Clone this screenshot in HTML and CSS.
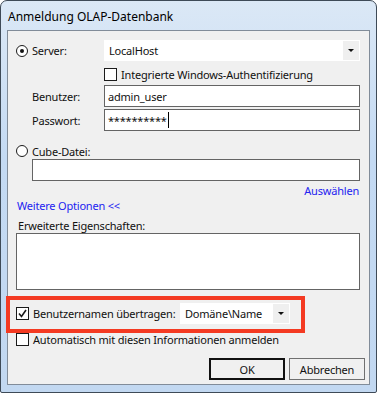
FILE: index.html
```html
<!DOCTYPE html>
<html lang="de">
<head>
  <meta charset="UTF-8" />
  <title>Anmeldung OLAP-Datenbank</title>
  <link rel="stylesheet" href="styles.css">
</head>
<body>
  <div class="window">
    <div class="titlebar">Anmeldung OLAP-Datenbank</div>
    <div class="client">

      <div class="row r-server">
        <span class="radio checked"></span>
        <span class="label">Server:</span>
        <div class="combo wide">
          <span class="value">LocalHost</span>
          <span class="drop"><span class="arrow"></span></span>
        </div>
      </div>

      <div class="row r-wauth">
        <span class="check"></span>
        <span>Integrierte Windows-Authentifizierung</span>
      </div>

      <div class="row r-user">
        <span class="label">Benutzer:</span>
        <div class="input wide">admin_user</div>
      </div>

      <div class="row r-pass">
        <span class="label">Passwort:</span>
        <div class="input wide">**********<span class="caret"></span></div>
      </div>

      <div class="row r-cube">
        <span class="radio"></span>
        <span>Cube-Datei:</span>
      </div>

      <div class="row r-cubefile">
        <div class="input full"></div>
      </div>

      <div class="row r-select">
        <a class="link">Auswählen</a>
      </div>

      <div class="row r-more">
        <a class="link">Weitere Optionen &lt;&lt;</a>
      </div>

      <div class="row r-props">Erweiterte Eigenschaften:</div>
      <div class="textarea"></div>

      <div class="row r-pass-user">
        <span class="check checked">
          <svg width="9" height="9" viewBox="0 0 9 9"><path d="M1 4.5 L3.5 7.5 L8 1" fill="none" stroke="#1b1b1b" stroke-width="1.6"/></svg>
        </span>
        <span class="label2">Benutzernamen übertragen:</span>
        <div class="combo small">
          <span class="value">Domäne\Name</span>
          <span class="drop"><span class="arrow"></span></span>
        </div>
        <div class="highlight"></div>
      </div>

      <div class="row r-auto">
        <span class="check"></span>
        <span>Automatisch mit diesen Informationen anmelden</span>
      </div>

      <div class="buttons">
        <button class="btn default">OK</button>
        <button class="btn">Abbrechen</button>
      </div>
    </div>
  </div>
</body>
</html>
```

FILE: styles.css
```css
html, body {
  margin: 0;
  padding: 0;
  background: #fff;
}
body {
  font-family: "Noto Sans", "Open Sans", sans-serif;
  font-size: 11px;
  letter-spacing: -0.2px;
  color: #111;
}
.window {
  width: 377px;
  height: 393px;
  box-sizing: border-box;
  border: 1px solid #3e4a57;
  border-radius: 7px 7px 2px 2px;
  background: linear-gradient(#dbe8f6, #c4daf3 40%, #c2d8f1);
  display: flex;
  flex-direction: column;
}
.titlebar {
  height: 29px;
  padding-left: 7px;
  line-height: 31px;
  font-size: 12px;
  letter-spacing: 0;
  color: #000;
}
.client {
  width: 363px;
  height: 355px;
  margin-left: 6px;
  box-sizing: border-box;
  border: 1px solid #818c99;
  background: #f0f0f0;
  padding: 9px 8px 0 8px;
  position: relative;
}
.row {
  display: flex;
  align-items: center;
}
.radio {
  width: 10px;
  height: 10px;
  border: 1px solid #1b1b1b;
  border-radius: 50%;
  background: #fff;
  margin-right: 4px;
  position: relative;
  flex: none;
}
.radio.checked::after {
  content: "";
  position: absolute;
  left: 3px;
  top: 3px;
  width: 4px;
  height: 4px;
  border-radius: 50%;
  background: #111;
}
.check {
  width: 11px;
  height: 11px;
  border: 1px solid #1b1b1b;
  background: #fff;
  margin-right: 4px;
  flex: none;
  display: flex;
  align-items: center;
  justify-content: center;
}
.label {
  width: 72px;
}
.r-server {
  height: 21px;
}
.r-user .label,
.r-pass .label {
  margin-left: 16px;
}
.combo {
  background: #fff;
  height: 21px;
  display: flex;
  align-items: center;
  justify-content: space-between;
  box-sizing: border-box;
}
.combo .value {
  padding-left: 5px;
}
.combo .drop {
  width: 16px;
  height: 19px;
  margin-right: 1px;
  background: #efefef;
  display: flex;
  align-items: center;
  justify-content: center;
}
.arrow {
  width: 0;
  height: 0;
  border-left: 3px solid transparent;
  border-right: 3px solid transparent;
  border-top: 3px solid #111;
}
.wide {
  width: 256px;
}
.r-wauth {
  margin-top: 6px;
  margin-left: 88px;
  height: 15px;
}
.input {
  height: 22px;
  box-sizing: border-box;
  border: 1px solid #646464;
  background: #fff;
  padding-left: 3px;
  display: flex;
  align-items: center;
}
.caret {
  display: inline-block;
  width: 1px;
  height: 16px;
  background: #000;
  margin-left: 1px;
}
.r-user {
  margin-top: 3px;
}
.r-pass {
  margin-top: 2px;
}
.r-cube {
  margin-top: 13px;
  height: 14px;
}
.r-cubefile {
  margin-top: 1px;
  padding-left: 16px;
}
.full {
  width: 328px;
}
.link {
  color: #2323f0;
}
.r-select {
  justify-content: flex-end;
  height: 15px;
  margin-top: 2px;
  padding-right: 2px;
}
.r-more {
  height: 14px;
  margin-left: 1px;
}
.r-props {
  height: 14px;
  margin-top: 6px;
  margin-left: 2px;
}
.textarea {
  width: 344px;
  height: 57px;
  margin-top: 1px;
  box-sizing: border-box;
  border: 1px solid #646464;
  background: #fff;
}
.r-pass-user {
  margin-top: 13px;
  height: 21px;
  position: relative;
}
.label2 {
  width: 147px;
}
.small {
  width: 110px;
}
.highlight {
  position: absolute;
  left: -10px;
  top: -7px;
  width: 291px;
  height: 29px;
  border: 4px solid #f43a22;
  pointer-events: none;
}
.r-auto {
  margin-top: 8px;
  height: 14px;
}
.buttons {
  display: flex;
  justify-content: flex-end;
  gap: 4px;
  margin-top: 12px;
  margin-right: -4px;
}
.btn {
  font-family: inherit;
  font-size: 11px;
  letter-spacing: -0.2px;
  color: #111;
  height: 22px;
  width: 76px;
  box-sizing: border-box;
  border: 1px solid #707070;
  background: #f0f0f0;
  padding: 0;
}
.btn.default {
  border: 2px solid #111;
}
```
